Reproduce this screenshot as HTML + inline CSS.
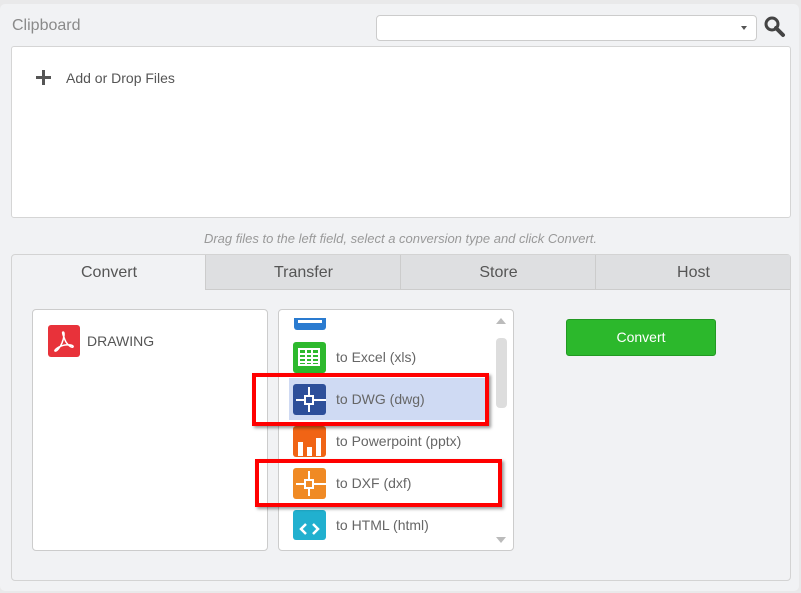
<!DOCTYPE html><html><head><style>
body{margin:0;width:801px;height:593px;background:#e9e9ea;position:relative;overflow:hidden;font-family:"Liberation Sans",sans-serif}
div{position:absolute;box-sizing:border-box}
.t{font-size:14px;color:#555}
.ic{width:33px;height:31px;border-radius:3px}
.lbl{left:336px;font-size:14px;color:#666}
.red{border:4px solid #f00;box-shadow:2px 2px 3px rgba(0,0,0,.4)}
</style></head><body>
<div style="left:0;top:4px;width:799px;height:587px;background:#f1f2f4;border-radius:5px"></div>
<div style="left:12px;top:17px;font-size:16px;color:#8a8a8a">Clipboard</div>
<div style="left:376px;top:15px;width:381px;height:26px;background:#fff;border:1px solid #ccc;border-radius:4px"></div>
<div style="left:741px;top:26px;width:0;height:0;border-left:3px solid transparent;border-right:3px solid transparent;border-top:4px solid #555"></div>
<svg style="position:absolute;left:763px;top:15px" width="24" height="24"><circle cx="9" cy="9" r="6" fill="none" stroke="#444" stroke-width="3"/><path d="M13 13l7 7" stroke="#444" stroke-width="4" stroke-linecap="round"/></svg>
<div style="left:11px;top:46px;width:780px;height:172px;background:#fff;border:1px solid #d5d5d5;border-radius:3px"></div>
<div style="left:36px;top:76px;width:15px;height:3px;background:#555"></div>
<div style="left:42px;top:70px;width:3px;height:15px;background:#555"></div>
<div class="t" style="left:66px;top:70px">Add or Drop Files</div>
<div style="left:0;width:801px;top:231px;text-align:center;font-size:13px;font-style:italic;color:#999">Drag files to the left field, select a conversion type and click Convert.</div>
<div style="left:11px;top:254px;width:780px;height:327px;border:1px solid #d3d3d3;border-radius:4px;background:#f1f2f4"></div>
<div style="left:205px;top:255px;width:585px;height:35px;background:#dedfe1;border-left:1px solid #ccc;border-bottom:1px solid #ccc"></div>
<div style="left:400px;top:255px;width:1px;height:35px;background:#ccc"></div>
<div style="left:595px;top:255px;width:1px;height:35px;background:#ccc"></div>
<div style="left:12px;top:264px;width:194px;text-align:center;font-size:16px;color:#555">Convert</div>
<div style="left:206px;top:264px;width:195px;text-align:center;font-size:16px;color:#555">Transfer</div>
<div style="left:401px;top:264px;width:195px;text-align:center;font-size:16px;color:#555">Store</div>
<div style="left:596px;top:264px;width:195px;text-align:center;font-size:16px;color:#555">Host</div>
<div style="left:32px;top:309px;width:236px;height:242px;background:#fff;border:1px solid #ccc;border-radius:4px"></div>
<div class="ic" style="left:48px;top:325px;width:32px;height:32px;background:#e8323a"></div>
<svg style="position:absolute;left:48px;top:325px" width="32" height="32"><path d="M15 7c2 0 1 6-1 11s-6 9-7 8 4-5 10-6 9 1 8 2-6-2-8-7-3-8-2-8z" fill="none" stroke="#fff" stroke-width="1.5"/></svg>
<div class="t" style="left:87px;top:333px">DRAWING</div>
<div style="left:278px;top:309px;width:236px;height:242px;background:#fff;border:1px solid #ccc;border-radius:4px;overflow:hidden"></div>
<div style="left:294px;top:318px;width:32px;height:12px;background:#2a7bd0;border-radius:0 0 3px 3px"></div>
<div style="left:298px;top:320px;width:24px;height:3px;background:#fff"></div>
<div style="left:496px;top:318px;border-left:5px solid transparent;border-right:5px solid transparent;border-bottom:6px solid #bbb"></div>
<div style="left:496px;top:537px;border-left:5px solid transparent;border-right:5px solid transparent;border-top:6px solid #bbb"></div>
<div style="left:496px;top:338px;width:11px;height:70px;background:#ddd;border-radius:4px"></div>
<div style="left:289px;top:378px;width:200px;height:42px;background:#cfdaf3"></div>
<div class="ic" style="left:293px;top:342px;background:#2db92d"></div>
<svg style="position:absolute;left:298px;top:347px" width="22" height="20"><path d="M1 2h20v16H1z" fill="none" stroke="#fff" stroke-width="2"/><path d="M1 7h20M1 11h20M1 15h20M8 2v16M14 2v16" stroke="#fff" stroke-width="2"/></svg>
<div class="lbl" style="top:349px">to Excel (xls)</div>
<div class="ic" style="left:293px;top:384px;background:#2d4f9a"></div>
<svg style="position:absolute;left:293px;top:384px" width="33" height="31"><path d="M3 16h30M16 3v25" stroke="#fff" stroke-width="2"/><rect x="12" y="12" width="8" height="8" fill="#2d4f9a" stroke="#fff" stroke-width="2"/></svg>
<div class="lbl" style="top:391px">to DWG (dwg)</div>
<div class="ic" style="left:293px;top:426px;background:#f06415"></div>
<svg style="position:absolute;left:293px;top:426px" width="33" height="31"><path d="M5 30V16h5v14zM14 30v-9h5v9zM23 30V12h5v18z" fill="#fff"/></svg>
<div class="lbl" style="top:433px">to Powerpoint (pptx)</div>
<div class="ic" style="left:293px;top:468px;background:#f08a24"></div>
<svg style="position:absolute;left:293px;top:468px" width="33" height="31"><path d="M3 16h30M16 3v25" stroke="#fff" stroke-width="2"/><rect x="12" y="12" width="8" height="8" fill="#f08a24" stroke="#fff" stroke-width="2"/></svg>
<div class="lbl" style="top:475px">to DXF (dxf)</div>
<div class="ic" style="left:293px;top:510px;background:#21b0cf;height:30px"></div>
<svg style="position:absolute;left:293px;top:510px" width="33" height="31"><path d="M13 14l-5 5 5 5M20 14l5 5-5 5" stroke="#fff" stroke-width="2.5" fill="none"/></svg>
<div class="lbl" style="top:517px">to HTML (html)</div>
<div class="red" style="left:252px;top:373px;width:237px;height:53px"></div>
<div class="red" style="left:255px;top:459px;width:247px;height:48px"></div>
<div style="left:566px;top:319px;width:150px;height:37px;background:#2cb82c;border:1px solid #229922;border-radius:3px;color:#fff;font-size:14px;text-align:center;line-height:35px">Convert</div>
</body></html>
